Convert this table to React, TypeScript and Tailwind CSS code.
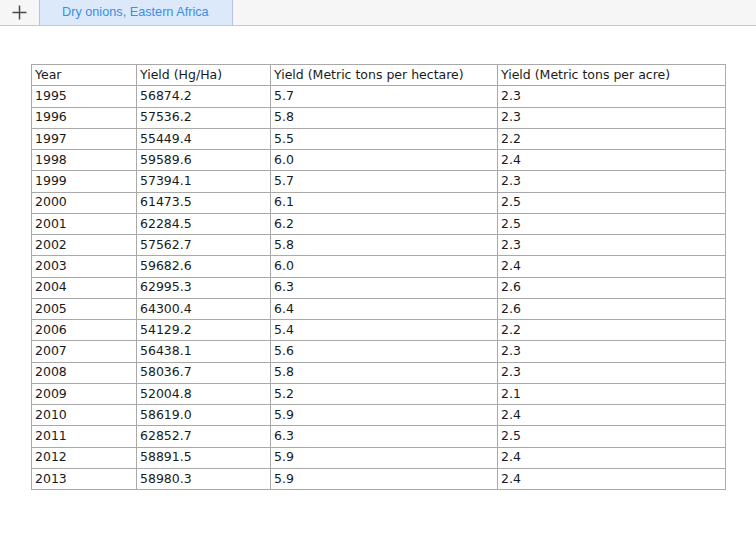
import React from "react";

const rows: [string, string, string, string][] = [
  ["1995", "56874.2", "5.7", "2.3"],
  ["1996", "57536.2", "5.8", "2.3"],
  ["1997", "55449.4", "5.5", "2.2"],
  ["1998", "59589.6", "6.0", "2.4"],
  ["1999", "57394.1", "5.7", "2.3"],
  ["2000", "61473.5", "6.1", "2.5"],
  ["2001", "62284.5", "6.2", "2.5"],
  ["2002", "57562.7", "5.8", "2.3"],
  ["2003", "59682.6", "6.0", "2.4"],
  ["2004", "62995.3", "6.3", "2.6"],
  ["2005", "64300.4", "6.4", "2.6"],
  ["2006", "54129.2", "5.4", "2.2"],
  ["2007", "56438.1", "5.6", "2.3"],
  ["2008", "58036.7", "5.8", "2.3"],
  ["2009", "52004.8", "5.2", "2.1"],
  ["2010", "58619.0", "5.9", "2.4"],
  ["2011", "62852.7", "6.3", "2.5"],
  ["2012", "58891.5", "5.9", "2.4"],
  ["2013", "58980.3", "5.9", "2.4"],
];

const headers = [
  "Year",
  "Yield (Hg/Ha)",
  "Yield (Metric tons per hectare)",
  "Yield (Metric tons per acre)",
];

const cell =
  "border border-[#a9a9a9] px-[3px] h-[21.25px] p-0 align-middle leading-none";

export default function App() {
  return (
    <div className="min-h-[541px] w-[756px] bg-white">
      <div className="flex h-[26px] border-b border-[#c9c9c9] bg-[#f6f6f6]">
        <button
          type="button"
          className="flex w-[39px] items-center justify-center pb-[1px]"
        >
          <svg width="15" height="15" viewBox="0 0 15 15">
            <path d="M7.5 0.5v14M0.5 7.5h14" stroke="#4a4a4a" strokeWidth="1.5" />
          </svg>
        </button>
        <div className="flex w-[194px] items-center border-x border-[#b7c3df] bg-[#dbe9fb] pl-[22px] text-[12.7px] text-[#3b8de6] font-['Liberation_Sans',sans-serif]">
          Dry onions, Eastern Africa
        </div>
      </div>

      <div className="pl-[31px] pt-[38px]">
        <table className="w-[694px] table-fixed border-collapse font-['DejaVu_Sans',sans-serif] text-[12.5px] text-[#1a1a1a]">
          <colgroup>
            <col className="w-[105px]" />
            <col className="w-[134px]" />
            <col className="w-[227px]" />
            <col className="w-[228px]" />
          </colgroup>
          <thead>
            <tr>
              {headers.map((h) => (
                <td key={h} className={cell}>
                  {h}
                </td>
              ))}
            </tr>
          </thead>
          <tbody>
            {rows.map((r) => (
              <tr key={r[0]}>
                {r.map((v, i) => (
                  <td key={i} className={cell}>
                    {v}
                  </td>
                ))}
              </tr>
            ))}
          </tbody>
        </table>
      </div>
    </div>
  );
}
